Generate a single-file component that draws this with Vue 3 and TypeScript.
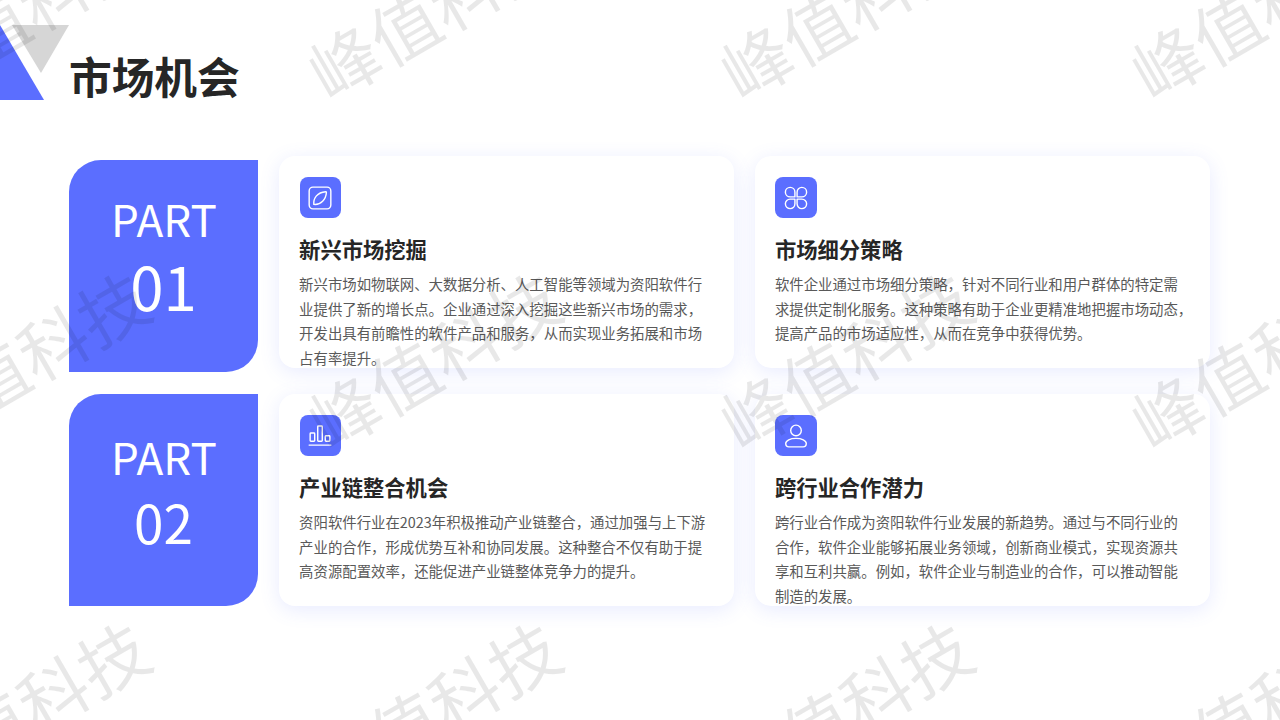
<script setup lang="ts">
interface Card { title: string; text: string; icon: string; rest?: string }
const rows: { part: string; cards: Card[] }[] = [
  { part: '01', cards: [
    { icon: 'leaf', title: '新兴市场挖掘', text: '新兴市场如物联网、大数据分析、人工智能等领域为资阳软件行业提供了新的增长点。企业通过深入挖掘这些新兴市场的需求，开发出具有前瞻性的软件产品和服务，从而实现业务拓展和市场占有率提升。' },
    { icon: 'clover', title: '市场细分策略', text: '软件企业通过市场细分策略，针对不同行业和用户群体的特定需求提供定制化服务。这种策略有助于企业更精准地把握市场动态', rest: '提高产品的市场适应性，从而在竞争中获得优势。' },
  ] },
  { part: '02', cards: [
    { icon: 'bars', title: '产业链整合机会', text: '资阳软件行业在2023年积极推动产业链整合，通过加强与上下游产业的合作，形成优势互补和协同发展。这种整合不仅有助于提高资源配置效率，还能促进产业链整体竞争力的提升。' },
    { icon: 'user', title: '跨行业合作潜力', text: '跨行业合作成为资阳软件行业发展的新趋势。通过与不同行业的合作，软件企业能够拓展业务领域，创新商业模式，实现资源共享和互利共赢。例如，软件企业与制造业的合作，可以推动智能制造的发展。' },
  ] },
]
const marks = Array.from({ length: 12 }, (_, i) => i)
</script>

<template>
  <div class="page" lang="zh-CN">
    <svg class="corner" width="70" height="100" viewBox="0 0 70 100">
      <polygon points="0,25 44,100 0,100" fill="#5b6eff" />
      <polygon points="12,25 69,25 41,73" fill="#d6d6d6" />
    </svg>
    <header class="head"><h1>市场机会</h1></header>
    <main class="rows">
      <section v-for="(row, r) in rows" :key="row.part" class="row" :class="{ first: r === 0 }">
        <div class="part" :class="'part-' + row.part">
          <span class="part-label">PART</span>
          <span class="part-num">{{ row.part }}</span>
        </div>
        <article v-for="card in row.cards" :key="card.title" class="card">
          <div class="icon">
            <svg width="26" height="26" viewBox="0 0 24 24" fill="none" stroke="#fff" stroke-width="1.3" stroke-linecap="round" stroke-linejoin="round">
              <template v-if="card.icon === 'leaf'">
                <rect x="2" y="2" width="20" height="20" rx="3.5" />
                <path d="M6.3 17.9C5.8 12 9.5 6.8 17.2 6.2c.4 0 .7.3.7.7-.4 6.2-5 11.8-11.6 11z" />
              </template>
              <template v-else-if="card.icon === 'clover'">
                <path d="M11 11H6.6A4.4 4.4 0 1 1 11 6.6z" />
                <path d="M13 11h4.4A4.4 4.4 0 1 0 13 6.6z" />
                <path d="M11 13H6.6A4.4 4.4 0 1 0 11 17.4z" />
                <path d="M13 13h4.4A4.4 4.4 0 1 1 13 17.4z" />
              </template>
              <template v-else-if="card.icon === 'bars'">
                <rect x="2.9" y="9.2" width="4.2" height="7.6" rx=".7" />
                <rect x="9.9" y="2.8" width="4.2" height="14" rx=".7" />
                <rect x="16.9" y="11.8" width="4.2" height="5" rx=".7" />
                <path d="M2 20.4h20" />
              </template>
              <template v-else>
                <circle cx="12" cy="6.9" r="4.9" />
                <path d="M5.5 22h13a3 3 0 0 0 3-3c0-3-4.2-4.8-9.5-4.8S2.5 16 2.5 19a3 3 0 0 0 3 3z" />
              </template>
            </svg>
          </div>
          <h2>{{ card.title }}</h2>
          <p>{{ card.text }}<template v-if="card.rest"><span class="hang">，</span>{{ card.rest }}</template></p>
        </article>
      </section>
    </main>
    <div class="marks" aria-hidden="true">
      <span v-for="m in marks" :key="m" class="mark"><span class="mark-text">峰值科技</span></span>
    </div>
  </div>
</template>

<style>
html, body { margin: 0; background: #fff; }
</style>

<style scoped>
.page {
  position: relative;
  width: 1280px;
  height: 720px;
  overflow: hidden;
  background: #fff;
  font-family: "Noto Sans CJK SC", "Noto Sans", sans-serif;
  color: #262626;
}
.corner { position: absolute; left: 0; top: 0; }
.head { height: 160px; box-sizing: border-box; padding: 45px 0 0 69px; }
h1 { margin: 0; font-size: 42.7px; line-height: 60px; font-weight: 700; }
.rows { display: flex; flex-direction: column; gap: 22px; padding-left: 69px; }
.row { display: flex; gap: 20.8px; height: 212px; }
.part {
  width: 189px;
  flex: none;
  background: #5b6eff;
  color: #fff;
  border-radius: 32px 0 32px 0;
  display: flex;
  flex-direction: column;
  align-items: center;
  justify-content: center;
}
.part-label { margin-left: 1px; font-size: 44px; line-height: 38px; }
.part-num { font-size: 60px; line-height: 96px; }
.part-02 .part-label { line-height: 42px; }
.part-02 .part-num { font-size: 53px; line-height: 88px; }
.card {
  width: 455px;
  height: 212px;
  flex: none;
  box-sizing: border-box;
  padding: 20.8px 20.8px 0;
  background: #fff;
  border-radius: 16px;
  box-shadow: 0 4px 20px rgba(91, 110, 255, .14);
}
.first .card { margin-top: -4px; }
.icon {
  width: 41.6px;
  height: 41.6px;
  border-radius: 8px;
  background: #5b6eff;
  display: flex;
  align-items: center;
  justify-content: center;
}
h2 { margin: 15px 0 7px -.5px; font-size: 21.3px; line-height: 32px; font-weight: 700; }
p { margin: 0 0 0 -.5px; font-size: 14.4px; line-height: 24.48px; color: #595959; }
.hang { display: inline-block; width: 7.2px; white-space: nowrap; }
.marks {
  position: absolute;
  left: -184px;
  top: -167px;
  display: grid;
  grid-template-columns: repeat(4, 411.5px);
  grid-auto-rows: 350px;
  pointer-events: none;
}
.mark { display: flex; align-items: center; justify-content: center; }
.mark-text {
  font-size: 69px;
  line-height: 1;
  white-space: nowrap;
  color: rgba(0, 0, 0, .09);
  transform: rotate(-30deg);
}
</style>
